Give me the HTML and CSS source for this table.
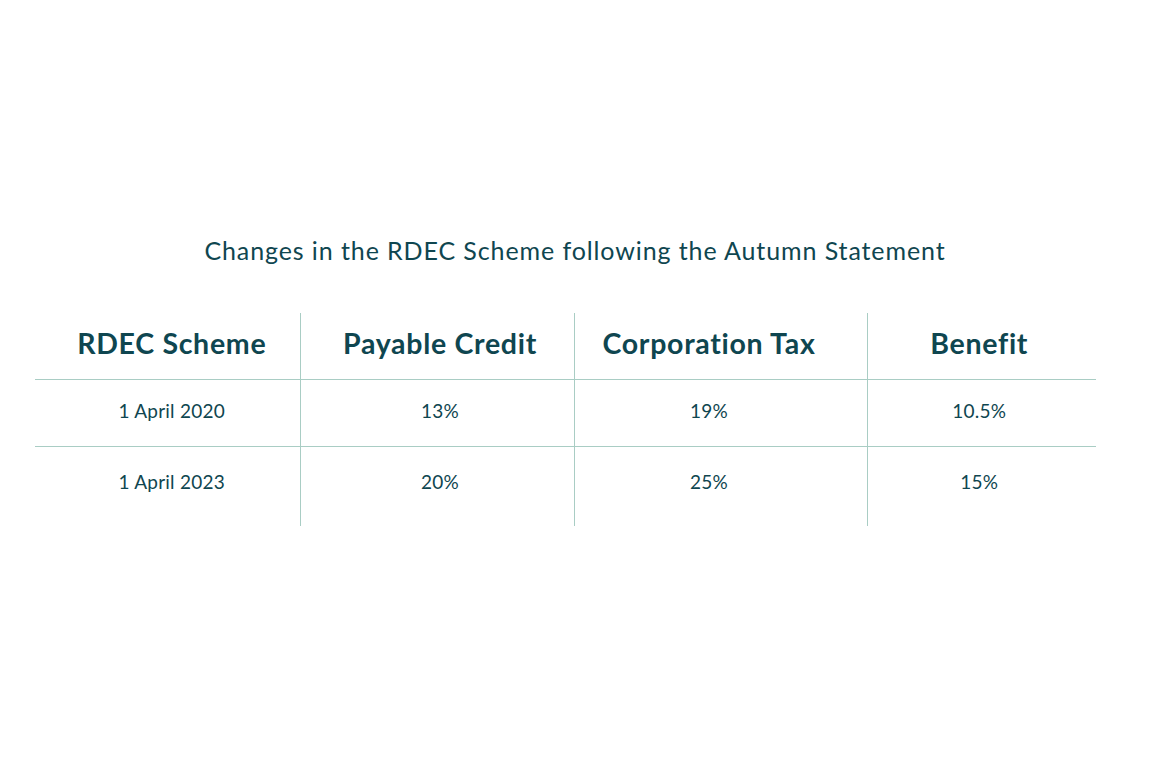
FILE: index.html
```html
<!DOCTYPE html>
<html>
<head>
<meta charset="utf-8">
<link rel="stylesheet" href="styles.css">
</head>
<body>
<div class="page">
  <h1 class="title">Changes in the RDEC Scheme following the Autumn Statement</h1>
  <table class="rdec">
    <colgroup>
      <col class="c1"><col class="c2"><col class="c3"><col class="c4">
    </colgroup>
    <thead>
      <tr class="head">
        <th>RDEC Scheme</th><th>Payable Credit</th><th>Corporation Tax</th><th>Benefit</th>
      </tr>
    </thead>
    <tbody>
      <tr class="row1">
        <td>1 April 2020</td><td>13%</td><td>19%</td><td>10.5%</td>
      </tr>
      <tr class="row2">
        <td>1 April 2023</td><td>20%</td><td>25%</td><td>15%</td>
      </tr>
    </tbody>
  </table>
</div>
</body>
</html>
```
FILE: styles.css
```css
html, body {
  margin: 0;
  padding: 0;
  background: #ffffff;
}
body {
  font-family: "Lato", "Open Sans", sans-serif;
  color: #0f4650;
}
.page {
  width: 1150px;
  height: 767px;
  padding-top: 232px;
  box-sizing: border-box;
}
.title {
  margin: 0;
  text-align: center;
  font-weight: 400;
  font-size: 25px;
  letter-spacing: 0.9px;
  line-height: 36px;
  height: 36px;
}
.rdec {
  margin: 45px 0 0 35px;
  width: 1061px;
  border-collapse: collapse;
  table-layout: fixed;
}
.c1 { width: 265px; }
.c2 { width: 274px; }
.c3 { width: 293px; }
.c4 { width: 229px; }
.rdec th, .rdec td {
  padding: 0;
  text-align: center;
  vertical-align: top;
  border-left: 1px solid #a9cdc4;
}
.rdec th:nth-child(1), .rdec td:nth-child(1) {
  border-left: none;
  padding-left: 9px;
}
.rdec th:nth-child(2), .rdec td:nth-child(2) {
  padding-left: 6px;
}
.rdec th:nth-child(3), .rdec td:nth-child(3) {
  padding-right: 23px;
}
.rdec th:nth-child(4), .rdec td:nth-child(4) {
  padding-right: 5px;
}
.rdec th {
  font-weight: 700;
  font-size: 28.5px;
  letter-spacing: 0.7px;
  height: 66px;
  line-height: 61px;
  border-bottom: 1px solid #a9cdc4;
}
.row1 td {
  font-size: 19px;
  letter-spacing: 0.25px;
  height: 66px;
  line-height: 61px;
  border-bottom: 1px solid #a9cdc4;
}
.row2 td {
  font-size: 19px;
  letter-spacing: 0.25px;
  height: 79px;
  line-height: 69px;
}
```
